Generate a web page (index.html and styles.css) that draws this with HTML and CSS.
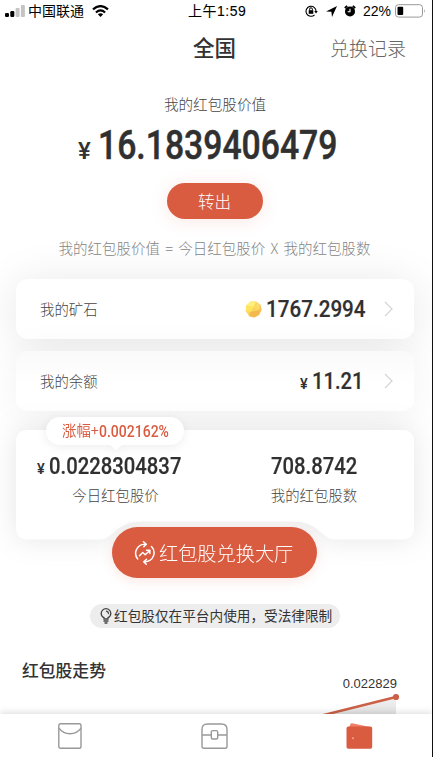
FILE: index.html
```html
<!DOCTYPE html>
<html lang="zh-CN">
<head>
<meta charset="utf-8">
<title>全国</title>
<link rel="stylesheet" href="styles.css">
</head>
<body>
<div class="phone">
  <header class="status">
    <div class="status-left">
      <svg width="20" height="12" viewBox="0 0 20 12"><rect x="0" y="8" width="4" height="4" rx="1.2"/><rect x="5.3" y="6" width="4" height="6" rx="1.2"/><rect x="10.6" y="3" width="4" height="9" rx="1" fill="#c4c4c4"/><rect x="15.9" y="0" width="4" height="12" rx="1" fill="#c4c4c4"/></svg>
      <span class="carrier">中国联通</span>
      <svg class="wifi" width="17" height="12" viewBox="0 0 17 12"><g fill="none" stroke="#000" stroke-width="2.2"><path d="M1 4.4Q8.5-2.2 16 4.4"/><path d="M3.9 7.5Q8.5 3.4 13.1 7.5"/></g><path d="M5.8 9.3Q8.5 7.2 11.2 9.3L8.5 12Z"/></svg>
    </div>
    <span class="clock">上午1:59</span>
    <div class="status-right">
      <svg width="13" height="12" viewBox="0 0 13 12"><path d="M9.6 9.8A5 5 0 1 1 11 6.8" fill="none" stroke="#000" stroke-width="1.1"/><path d="M9.2 6h3.6L11 8.4z"/><rect x="3.7" y="5.2" width="4.6" height="3.6"/><path d="M4.6 5.4V4.2a1.4 1.4 0 0 1 2.8 0v1.2" fill="none" stroke="#000"/></svg>
      <svg class="arrow" width="11" height="11" viewBox="0 0 11 11"><path d="M11 0L0 5.5L5.4 5.8L6 11Z"/></svg>
      <svg class="alarm" width="12" height="12" viewBox="0 0 12 12"><circle cx="6" cy="6.4" r="5"/><path d="M.8 3L3.2.9M11.2 3L8.8.9" stroke="#000" stroke-width="1.8"/><path d="M6 3.7v3h-2.4" fill="none" stroke="#fff" stroke-width="1.1"/></svg>
      <span class="percent">22%</span>
      <svg class="battery" width="31" height="14" viewBox="0 0 31 14"><rect x=".5" y=".7" width="27" height="12.4" rx="3" fill="none" stroke="#999"/><rect x="2.5" y="2.7" width="5.7" height="8.4" rx="1"/><path d="M29 5q1.8 2 0 4z" fill="#999"/></svg>
    </div>
  </header>

  <nav class="topbar">
    <h1>全国</h1>
    <a class="records">兑换记录</a>
  </nav>

  <section class="value">
    <p class="value-label">我的红包股价值</p>
    <div class="amount"><span class="yen">¥</span><span class="num num-big">16.1839406479</span></div>
    <button class="transfer">转出</button>
    <p class="formula">我的红包股价值 = 今日红包股价 X 我的红包股数</p>
  </section>

  <main class="cards">
    <div class="card card-ore">
      <span class="label">我的矿石</span>
      <svg class="coin" width="17" height="17" viewBox="0 0 17 17"><path d="M5.8.6L11 .5L15.5 4L16.5 9L14 14L9 16.5L4 15L.7 10L1.3 4.5Z" fill="#fad45c"/><path d="M5.8.6L11 .5L8.5 6L1.3 4.5Z" fill="#fff07a"/><path d="M11 .5L15.5 4L14 9L8.5 6Z" fill="#fbd968"/><path d="M1.3 4.5L8.5 6L5.4 11L.7 10Z" fill="#ffe55c"/><path d="M5.4 11L14 9L14 14L9 16.5L4 15Z" fill="#f3b94f"/><path d="M15.5 4L16.5 9L14 14L14 9Z" fill="#f5bf59"/></svg>
      <span class="num num-ore">1767.2994</span>
      <svg class="chevron" width="9" height="16" viewBox="0 0 9 16"><path d="M1 1L8 8L1 15"/></svg>
    </div>
    <div class="card card-balance">
      <span class="label">我的余额</span>
      <span class="yen yen-small">¥</span>
      <span class="num num-balance">11.21</span>
      <svg class="chevron" width="9" height="16" viewBox="0 0 9 16"><path d="M1 1L8 8L1 15"/></svg>
    </div>
    <div class="stock">
      <div class="stock-shape">
        <div class="stock-panel">
          <div class="stat stat-price">
            <div class="stat-value"><span class="yen yen-small">¥</span><span class="num num-price">0.0228304837</span></div>
            <p>今日红包股价</p>
          </div>
          <div class="stat stat-count">
            <div class="stat-value"><span class="num num-count">708.8742</span></div>
            <p>我的红包股数</p>
          </div>
        </div>
      </div>
      <div class="rise"><span class="rise-label">涨幅+</span><span class="num num-rise">0.002162%</span></div>
      <button class="hall">
        <svg width="22" height="24" viewBox="0 0 22 24" fill="none" stroke="#fff" stroke-width="1.5" stroke-linecap="round" stroke-linejoin="round"><path d="M3.7 18A9 9 0 0 1 2.2 9.2A9 9 0 0 1 11.5 3.2M9.5 .8L12.3 3.3L9.8 5.8"/><path d="M17.5 5.5A9 9 0 0 1 19.6 14.5A9 9 0 0 1 10.5 20.7M12.5 18.2L9.7 20.7L12.3 23.2"/><path d="M5.5 14.8L8.7 11.5L11.2 13.8L15.5 9.8M12.5 9.3H15.9V12.6"/></svg>
        <span>红包股兑换大厅</span>
      </button>
    </div>
  </main>

  <div class="notice">
    <svg width="12" height="16" viewBox="0 0 12 16" fill="none" stroke="#444" stroke-width="1.3" stroke-linecap="round"><path d="M4 11V9.7Q1.2 8.3 1.2 5.5A4.7 4.7 0 0 1 10.8 5.5Q10.8 8.3 8 9.7V11ZM4 13H8M5 15H7M8.5 5.5Q8.3 3.7 6.5 3.2"/></svg>
    <span>红包股仅在平台内使用，受法律限制</span>
  </div>

  <section class="trend">
    <h2>红包股走势</h2>
    <div class="chart">
      <span class="point-value">0.022829</span>
      <svg width="84" height="24" viewBox="0 0 84 24"><defs><linearGradient id="area" x2="0" y2="1"><stop stop-color="#f0f0f0"/><stop offset="1" stop-color="#e2e2e2"/></linearGradient></defs><path d="M5 23.5L79 5V24H5Z" fill="url(#area)"/><path d="M3 24L79 5" stroke="#cb6047" stroke-width="2.4"/><circle cx="79" cy="5" r="3.1" fill="#cb6047"/></svg>
    </div>
  </section>

  <footer class="tabs">
    <svg width="24" height="27" viewBox="0 0 24 27" fill="none" stroke="#999" stroke-width="1.4"><rect x=".8" y=".8" width="22.2" height="24.4" rx="1.8"/><path d="M1 5.2Q5 10.8 12 10.8T23 5.2"/></svg>
    <svg width="27" height="27" viewBox="0 0 27 27" fill="none" stroke="#999" stroke-width="1.4"><path d="M1 23.5V6.5Q1 1 6.5 1H20.5Q26 1 26 6.5V23.5Q26 25.3 24.2 25.3H2.8Q1 25.3 1 23.5ZM1 12H10M17 12H26"/><rect x="10.3" y="7.6" width="6.4" height="8.4" rx="1.5"/></svg>
    <svg width="27" height="27" viewBox="0 0 27 27"><path d="M2.8 5L4.5 1Q5 0 6 .2L24 4V8H3Z" fill="#ef8069"/><rect x=".5" y="3.6" width="25.7" height="22.2" rx="1.8" fill="#d95b40"/><circle cx="7" cy="15.2" r="1" fill="#f3a594"/></svg>
  </footer>
</div>
</body>
</html>
```
FILE: styles.css
```css
* { box-sizing: border-box; }
body { margin: 0; background: #fff; font-family: "Noto Sans CJK SC", sans-serif; color: #333; }
h1, h2, p { margin: 0; font-weight: 400; }
button { border: 0; padding: 0; font: inherit; color: #fff; background: #d95b40; }
svg { display: block; flex: none; }

.phone { width: 433px; height: 757px; overflow: hidden; display: flex; flex-direction: column; background: #fff; border-right: 1px solid #111; }

.status { height: 22px; display: grid; grid-template-columns: 188px 1fr auto; padding: 0 5px 0 5px; align-items: center; font-size: 14px; line-height: 22px; color: #000; flex: none; }
.status-left, .status-right { display: flex; align-items: center; }
.carrier { margin-left: 3px; line-height: 20px; padding-bottom: 2px; }
.wifi { margin-left: 8px; }
.clock { margin-left: -5px; font-family: "Liberation Sans", "Noto Sans CJK SC", sans-serif; letter-spacing: .5px; -webkit-text-stroke: .1px #000; }
.status-right { margin-right: 1px; }
.arrow { margin-left: 8px; }
.alarm { margin-left: 7px; }
.percent { margin-left: 7px; font-family: "Liberation Sans", sans-serif; font-size: 14px; }
.battery { margin-left: 4px; }

.topbar { height: 52px; flex: none; display: grid; grid-template-columns: 1fr auto 1fr; align-items: center; padding: 0 26px 2px 24px; }
.topbar h1 { grid-column: 2; font-size: 21.5px; font-weight: 500; line-height: 50px; margin-right: 1px; }
.records { justify-self: end; font-size: 19px; color: #666; font-weight: 300; }

.value { height: 205px; flex: none; display: flex; flex-direction: column; align-items: center; padding-top: 20px; }
.value-label { font-size: 14.6px; line-height: 20px; color: #444; font-weight: 300; margin-right: 2px; }
.amount { display: flex; align-items: baseline; height: 58px; line-height: 62px; margin-right: 16px; }
.num { display: block; font-family: Roboto, sans-serif; font-weight: 500; color: #303030; white-space: nowrap; transform: scaleX(.86); transform-origin: 0 50%; }
.num-big { font-size: 40.5px; width: 240px; transform: scaleX(.833); -webkit-text-stroke: .5px #303030; }
.yen { font-family: Roboto, sans-serif; font-weight: 500; font-size: 24px; width: 20px; }
.transfer { width: 96px; height: 36px; margin-top: 11px; flex: none; border-radius: 18px; font-size: 16.6px; line-height: 36px; font-weight: 300; box-shadow: 0 2px 18px rgba(217, 91, 64, .14); margin-right: 3px; }
.formula { margin-top: 19px; font-size: 14.5px; line-height: 20px; color: #858585; font-weight: 300; white-space: nowrap; word-spacing: 2px; margin-right: 3px; position: relative; z-index: 2; }

.cards { flex: none; padding: 0 18px 0 16px; display: flex; flex-direction: column; }
.card { height: 60px; margin-bottom: 12px; border-radius: 12px; display: flex; align-items: center; padding: 0 21px 0 24px; background: #fff; }
.card-ore { box-shadow: 0 4px 45px rgba(0, 0, 0, .1); }
.card-balance { margin-bottom: 19px; background: linear-gradient(#fafafa, #fff 55%); box-shadow: 0 4px 40px rgba(0, 0, 0, .06); }
.label { margin-right: auto; font-size: 14.4px; line-height: 20px; padding-bottom: 1px; color: #444; font-weight: 300; }
.coin { margin-right: 4px; }
.card .num, .stat .num { font-size: 24px; line-height: 28px; -webkit-text-stroke: .2px #303030; }
.num-ore { width: 118px; }
.num-balance { width: 72px; }
.card .num-balance { transform: scaleX(.84); }
.yen-small { font-size: 14.5px; line-height: 20px; width: 12px; color: #303030; }
.card .yen-small { margin-top: 7px; }
.chevron { fill: none; stroke: #d5d5d5; stroke-width: 1.2; }

.stock { position: relative; height: 110px; }
.stock-shape { filter: drop-shadow(0 0 14px rgba(0, 0, 0, .1)); }
.stock-panel { height: 110px; display: grid; grid-template-columns: 1fr 1fr; padding-top: 22px; background: #fff; clip-path: path("M12 0H386Q398 0 398 12V97Q398 109.5 386 109.5H319C306 109.5 303 91.5 277 91.5H127C98 91.5 99 109.5 83 109.5H12Q0 109.5 0 97V12Q0 0 12 0Z"); }
.stat { display: flex; flex-direction: column; align-items: center; }
.stat-value { display: flex; align-items: baseline; height: 32px; }
.stat p { font-size: 14.4px; line-height: 22px; color: #444; font-weight: 300; }
.num-price { width: 133px; }
.stat .num-price, .stat .num-count { transform: scaleX(.845); }
.num-count { width: 86px; }
.stat-count { margin-right: 1px; }
.stat-price .stat-value { margin-right: 12px; }
.rise { position: absolute; left: 30px; top: -13px; width: 138px; height: 28px; border-radius: 14px; background: #fff; filter: drop-shadow(0 2px 5px rgba(0, 0, 0, .07)); display: flex; align-items: center; padding-left: 16px; font-size: 14.4px; color: #d95b40; }
.rise::after { content: ""; position: absolute; left: 63px; top: 27px; border: 7px solid transparent; border-top: 6px solid #fff; border-bottom: 0; }
.rise-label { line-height: 20px; padding-bottom: 2px; }
.rise .num { font-size: 16.3px; color: #d95b40; }
.hall { position: absolute; left: 96px; top: 97px; width: 205px; height: 51px; border-radius: 26px; display: flex; align-items: center; padding-left: 22px; gap: 3px; font-size: 19.2px; font-weight: 300; white-space: nowrap; box-shadow: 0 3px 12px rgba(217, 91, 64, .15); }

.notice { flex: none; width: 250px; height: 24px; margin: 64px 0 0 90px; border-radius: 12px; background: #ededed; display: flex; align-items: center; padding-left: 10px; gap: 2px; font-size: 13.65px; line-height: 22px; white-space: nowrap; }
.notice span { padding-bottom: 2px; }
.trend { flex: none; height: 86px; display: flex; justify-content: space-between; padding: 30px 31px 0 22px; }
.trend h2 { font-size: 16.8px; font-weight: 500; line-height: 24px; }
.chart { display: flex; flex-direction: column; align-items: flex-end; padding-top: 18px; }
.point-value { font-family: "Liberation Sans", sans-serif; font-size: 13px; line-height: 16px; margin-right: 4px; }
.tabs { flex: none; height: 43px; position: relative; background: #fff; box-shadow: 0 -2px 6px rgba(0, 0, 0, .12); display: grid; grid-template-columns: 140px 149px 140px; justify-items: center; padding-top: 9px; }
```
